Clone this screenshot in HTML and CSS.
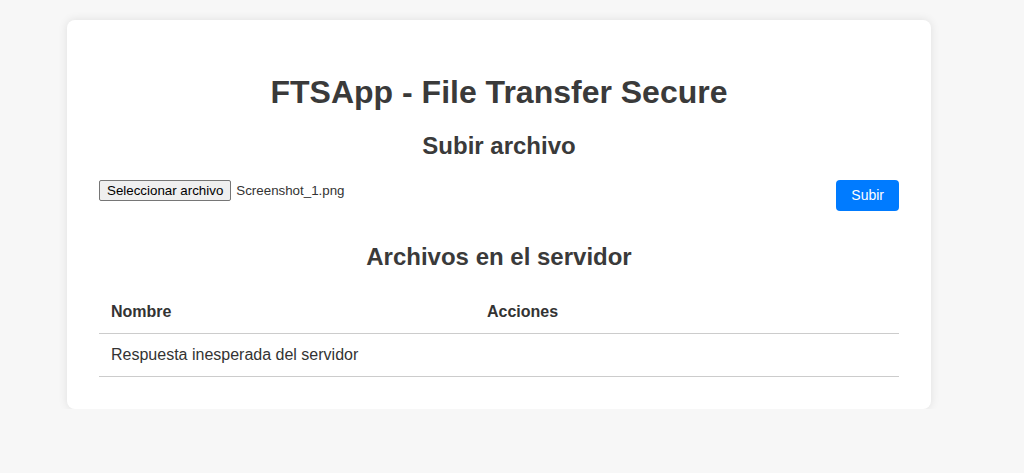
FILE: index.html
```html
<!DOCTYPE html>
<html lang="es">
<head>
<meta charset="utf-8">
<title>FTSApp - File Transfer Secure</title>
<link rel="stylesheet" href="styles.css">
</head>
<body>
<main class="container">
  <h1 class="title">FTSApp - File Transfer Secure</h1>
  <h2 class="section-title">Subir archivo</h2>
  <form class="upload-form">
    <div class="file-picker">
      <button type="button" class="file-btn">Seleccionar archivo</button>
      <span class="file-name">Screenshot_1.png</span>
    </div>
    <button type="button" class="submit-btn">Subir</button>
  </form>
  <h2 class="section-title">Archivos en el servidor</h2>
  <table class="files-table">
    <thead>
      <tr><th class="col-name">Nombre</th><th>Acciones</th></tr>
    </thead>
    <tbody>
      <tr><td colspan="2">Respuesta inesperada del servidor</td></tr>
    </tbody>
  </table>
</main>
</body>
</html>
```
FILE: styles.css
```css
html, body {
  margin: 0;
}
body {
  background: #f7f7f7;
  font-family: "Liberation Sans", Arial, sans-serif;
  color: #333;
  padding: 20px 26px 0 0;
}
.container {
  max-width: 800px;
  margin: 0 auto;
  background: #fff;
  padding: 32px;
  border-radius: 8px;
  box-shadow: 0 0 10px rgba(0, 0, 0, 0.1);
}
.title {
  font-size: 32px;
  text-align: center;
  margin: 22px 0 21px;
  color: #3a3a3a;
}
.section-title {
  font-size: 24px;
  text-align: center;
  margin: 20px 0;
  color: #3a3a3a;
}
.upload-form {
  display: flex;
  justify-content: space-between;
  align-items: flex-start;
  margin-bottom: 32px;
}
.file-picker {
  display: flex;
  align-items: center;
  gap: 5px;
}
.file-btn {
  font-family: "Liberation Sans", Arial, sans-serif;
  font-size: 13.33px;
  color: #000;
  background: #efefef;
  border: 1px solid #767676;
  border-radius: 2px;
  padding: 2px 7px;
}
.file-name {
  font-size: 13.33px;
  color: #333;
}
.submit-btn {
  font-family: "Liberation Sans", Arial, sans-serif;
  font-size: 14px;
  color: #fff;
  background: #007bff;
  border: none;
  border-radius: 4px;
  padding: 8px 15px;
  line-height: 15px;
}
.files-table {
  width: 100%;
  border-collapse: collapse;
  font-size: 16px;
}
.files-table th,
.files-table td {
  text-align: left;
  padding: 12px;
  border-bottom: 1px solid #ccc;
}
.files-table th.col-name {
  width: 47%;
  box-sizing: border-box;
}
```
